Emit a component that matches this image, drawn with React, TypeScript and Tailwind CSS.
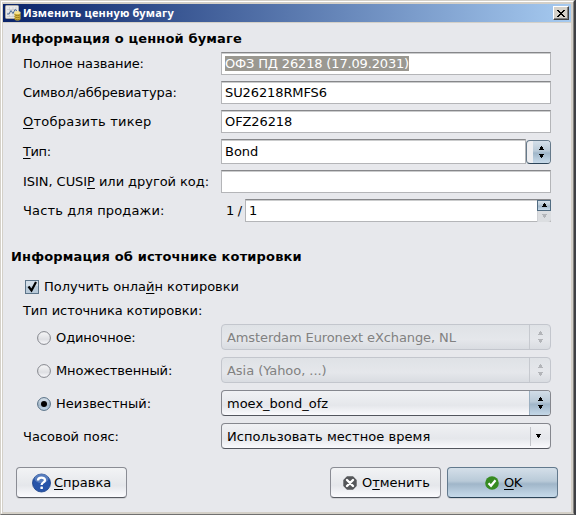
import React from 'react';

type Kids = { children?: React.ReactNode };

function Arrow({ down = false }: { down?: boolean }) {
  return (
    <svg width="5" height="4" viewBox="0 0 5 4" shapeRendering="crispEdges" className={down ? 'rotate-180' : ''}>
      <path d="M2 0H3V1H4V3H5V4H0V3H1V1H2Z" fill="currentColor" />
    </svg>
  );
}

function UpDown() {
  return (
    <span className="flex flex-col items-center gap-[4px]">
      <Arrow />
      <Arrow down />
    </span>
  );
}

function Label({ children, className = '' }: Kids & { className?: string }) {
  return <span className={'block w-[198px] shrink-0 whitespace-nowrap ' + className}>{children}</span>;
}

function Row({ children, className = '' }: Kids & { className: string }) {
  return <div className={'flex items-center ' + className}>{children}</div>;
}

function Field({ children, className = '' }: Kids & { className?: string }) {
  return (
    <div className={'flex h-[23px] w-[330px] items-center border border-[#b4b5b8] border-t-[#86878a] bg-white pl-[3px] shadow-[inset_0_1px_0_#cbcccd] ' + className}>
      {children}
    </div>
  );
}

const blueFace = 'bg-[linear-gradient(180deg,#d4dfe9_0%,#b9cad8_45%,#a0b6c9_55%,#bbcfe0_85%,#c6d9e9_100%)]';

function Combo({ children, disabled = false, className = '' }: Kids & { disabled?: boolean; className?: string }) {
  return (
    <div
      className={
        'flex h-[26px] w-[330px] items-center justify-between overflow-hidden rounded-[4px] border pl-[5px] ' +
        (disabled
          ? 'border-[#c3c6cd] bg-[linear-gradient(180deg,#dfe2e6,#e5e7eb_60%,#d9dce1)] text-[#818181]'
          : 'border-[#85878e] border-b-[#53565e] bg-[linear-gradient(180deg,#f0f1f4,#e5e7eb_60%,#fafafd)]')
      }
    >
      <span className={'pt-px ' + className}>{children}</span>
      <span
        className={
          'flex h-[26px] w-[21px] items-center justify-center ' +
          (disabled ? 'border-l border-[#c6c9cf] text-[#b3b5b9]' : 'border-l border-[#9bafc0] ' + blueFace)
        }
      >
        <UpDown />
      </span>
    </div>
  );
}

function Radio({ checked = false }: { checked?: boolean }) {
  return (
    <svg width="14" height="14" viewBox="0 0 14 14" className="mr-[5px] shrink-0">
      <defs>
        <linearGradient id="radioOff" x1="0" y1="0" x2="0" y2="1">
          <stop offset="0" stopColor="#f7f7f8" />
          <stop offset=".6" stopColor="#dedfe3" />
          <stop offset="1" stopColor="#fcfcff" />
        </linearGradient>
        <linearGradient id="radioOn" x1="0" y1="0" x2="0" y2="1">
          <stop offset="0" stopColor="#dbe5ee" />
          <stop offset=".6" stopColor="#a4b8ca" />
          <stop offset="1" stopColor="#c8def0" />
        </linearGradient>
      </defs>
      <circle cx="7" cy="7" r="6.4" fill={checked ? 'url(#radioOn)' : 'url(#radioOff)'} stroke={checked ? '#526b80' : '#83858c'} />
      {checked && <circle cx="7" cy="7" r="3" fill="#000" />}
    </svg>
  );
}

function Button({ children, className = '', blue = false }: Kids & { className?: string; blue?: boolean }) {
  return (
    <button
      className={
        'flex h-[31px] w-[111px] items-center rounded-[4px] border shadow-[0_1px_0_#d0d2d6] ' +
        (blue ? 'border-[#62798d] border-b-[#2c4458] ' + blueFace : 'border-[#8a8c94] border-b-[#565960] bg-[linear-gradient(180deg,#f2f3f5,#e5e7eb_60%,#fbfbfe)]') +
        ' ' + className
      }
    >
      {children}
    </button>
  );
}

function U({ children }: Kids) {
  return <span className="underline decoration-1 underline-offset-2">{children}</span>;
}

export default function App() {
  return (
    <div className="flex h-[515px] w-[576px] bg-[#3e4148] font-['DejaVu_Sans',sans-serif] text-[13px] leading-[15px] text-black">
      <div className="h-[515px] w-[575px] border-r border-b border-r-[#404040] border-b-[#707070] border-l border-t border-l-[#d4d0c8] border-t-[#d4d0c8]">
        <div className="h-full border border-[#808080] border-l-white border-t-white border-b-[#d4d0c8]">
          <div className="h-full border border-t-2 border-r-2 border-[#d4d0c8] bg-[#e7e8ec]">
            <div className="flex h-[18px] items-center bg-[linear-gradient(90deg,#0a246a,#a6caf0)] pr-[2px] pl-[2px]">
              <svg width="17" height="16" viewBox="0 0 17 16" className="shrink-0">
                <rect x=".5" y=".5" width="13" height="13" rx="1" fill="#e8e9eb" stroke="#aaa9a5" />
                <path d="M2 4.5H12M2 8H12M2 11.5H12M4.500 2V12M8 2V12M11 2V12" stroke="#c4c7cb" strokeWidth=".6" />
                <path d="M2 9L4 9L6 5.500L8 8.500L10 4.500L12 6" fill="none" stroke="#4a6c98" strokeWidth="1" />
                <path d="M9.500 7.500V14C10 16 15 16 15.500 14V7.500Z" fill="#d6b842" />
                <ellipse cx="12.500" cy="7.500" rx="3" ry="1.500" fill="#f5e391" />
                <path d="M9.500 9.500C11 11 14 11 15.500 9.500M9.500 11.500C11 13 14 13 15.500 11.500M9.500 13.500C11 15 14 15 15.500 13.500" fill="none" stroke="#8d6c12" strokeWidth=".8" />
              </svg>
              <span className="ml-px font-['Noto_Sans',sans-serif] text-[11px] font-bold leading-[14px] tracking-[0.22px] text-white">Изменить ценную бумагу</span>
              <span className="ml-auto flex h-[14px] w-[16px] items-center justify-center border border-white border-r-[#404040] border-b-[#404040] bg-[#d4d0c8] shadow-[inset_-1px_-1px_0_#808080]">
                <svg width="8" height="7" viewBox="0 0 8 7" shapeRendering="crispEdges">
                  <path d="M0 0H2V1H3V2H5V1H6V0H8V1H7V2H6V3H5V4H6V5H7V6H8V7H6V6H5V5H3V6H2V7H0V6H1V5H2V4H3V3H2V2H1V1H0Z" />
                </svg>
              </span>
            </div>
            <div className="h-px bg-[#d4d0c8]" />

            <h1 className="mt-[8px] ml-[8px] font-bold leading-[16px] tracking-[0.15px]">Информация о ценной бумаге</h1>
            <div className="pl-[20px]">
              <Row className="mt-[5px]">
                <Label className="tracking-[-0.13px]">Полное название:</Label>
                <Field><span className="bg-[#9a9891] tracking-[-0.16px] text-white">ОФЗ ПД 26218 (17.09.2031)</span></Field>
              </Row>
              <Row className="mt-[6px]">
                <Label className="tracking-[-0.1px]">Символ/аббревиатура:</Label>
                <Field className="tracking-[-0.1px]">SU26218RMFS6</Field>
              </Row>
              <Row className="mt-[6px]">
                <Label className="tracking-[0.23px]"><U>О</U>тобразить тикер</Label>
                <Field className="tracking-[-0.1px]">OFZ26218</Field>
              </Row>
              <Row className="mt-[6px]">
                <Label className="tracking-[-0.4px]"><U>Т</U>ип:</Label>
                <div className="flex h-[25px] w-[305px] items-center border border-[#b4b5b8] border-t-[#86878a] bg-white pl-[3px] shadow-[inset_0_1px_0_#cbcccd]">Bond</div>
                <div className="flex h-[24px] w-[25px] overflow-hidden rounded-[4px] border border-[#65798a] border-b-[#2c4458] bg-[#edeef1]">
                  <span className={'ml-auto flex w-[17px] items-center justify-center ' + blueFace}><UpDown /></span>
                </div>
              </Row>
              <Row className="mt-[6px]">
                <Label className="tracking-[-0.05px]">ISIN, CUSI<U>P</U> или другой код:</Label>
                <Field />
              </Row>
              <Row className="mt-[6px]">
                <Label className="tracking-[0.15px]">Часть для продажи:</Label>
                <span className="w-[24px] pl-[5px] tracking-[-0.3px] whitespace-nowrap">1 /</span>
                <div className="flex h-[23px] w-[306px] items-center border border-[#b4b5b8] border-t-[#86878a] bg-white pl-[3px] shadow-[inset_0_1px_0_#cbcccd]">
                  <span>1</span>
                  <span className="-mr-px ml-auto flex h-[22px] w-[14px] flex-col">
                    <span className={'flex h-[11px] items-center justify-center border border-[#516c82] ' + blueFace}><Arrow /></span>
                    <span className="flex h-[11px] items-center justify-center rounded-br-[3px] border-l border-[#cfd1d5] bg-[#dcdee1] text-[#b3b5b9]"><Arrow down /></span>
                  </span>
                </div>
              </Row>
            </div>

            <h2 className="mt-[27px] ml-[8px] font-bold leading-[16px] tracking-[0.15px]">Информация об источнике котировки</h2>
            <div className="mt-[14px] flex h-[15px] items-center pl-[22px]">
              <svg width="14" height="14" viewBox="0 0 14 14" className="mr-[5px]">
                <rect x=".5" y=".5" width="13" height="13" fill="#b9cad9" stroke="#5c7489" />
                <rect x="1" y="1" width="12" height="5" fill="#d3dee8" />
                <path d="M3.500 6.500L6.500 10.500L11 2" fill="none" stroke="#000" strokeWidth="2.200" />
              </svg>
              <span>Получить онла<U>й</U>н котировки</span>
            </div>
            <div className="mt-[9px] pl-[20px] tracking-[-0.08px]">Тип источника котировки:</div>
            <div className="mt-[6px] flex flex-col gap-[7px] pl-[20px]">
              <Row className="h-[26px]">
                <Label className="pt-px"><span className="flex items-center pl-[14px] tracking-[-0.1px]"><Radio />Одиночное:</span></Label>
                <Combo disabled className="tracking-[-0.1px]">Amsterdam Euronext eXchange, NL</Combo>
              </Row>
              <Row className="h-[26px]">
                <Label className="pt-px"><span className="flex items-center pl-[14px] tracking-[-0.12px]"><Radio />Множественный:</span></Label>
                <Combo disabled className="tracking-[-0.05px]">Asia (Yahoo, ...)</Combo>
              </Row>
              <Row className="h-[26px]">
                <Label className="pt-px"><span className="flex items-center pl-[14px]"><Radio checked />Неизвестный:</span></Label>
                <Combo>moex_bond_ofz</Combo>
              </Row>
              <Row className="h-[26px]">
                <Label className="pt-px">Часовой пояс:</Label>
                <div className="flex h-[26px] w-[330px] items-center justify-between rounded-[4px] border border-[#85878e] border-b-[#53565e] bg-[linear-gradient(180deg,#f0f1f4,#e5e7eb_60%,#fafafd)] pl-[5px]">
                  <span className="pt-px tracking-[0.06px]">Использовать местное время</span>
                  <span className="flex h-[19px] w-[20px] items-center border-l border-[#c2c4c9] pl-[5px]"><Arrow down /></span>
                </div>
              </Row>
            </div>

            <div className="mt-[18px] flex pr-[13px] pl-[13px]">
              <Button className="pl-[15px]">
                <svg width="19" height="20" viewBox="0 0 19 20" className="mr-[3px]">
                  <circle cx="9.500" cy="10" r="9" fill="#2754a9" stroke="#173f86" strokeWidth=".8" />
                  <ellipse cx="9.500" cy="5.500" rx="7" ry="4.500" fill="#7797cd" opacity=".6" />
                  <path d="M6 7.500C6 3.500 13 3.700 13 7.200C13 9.500 9.600 9.300 9.600 12" fill="none" stroke="#fff" strokeWidth="2.300" />
                  <rect x="8.400" y="13.500" width="2.500" height="2.500" rx=".6" fill="#fff" />
                </svg>
                <span><U>С</U>правка</span>
              </Button>
              <Button className="ml-auto pl-[12px]">
                <svg width="14" height="14" viewBox="0 0 14 14" className="mr-[5px]">
                  <path d="M4 .3H10L13.700 4V10L10 13.700H4L.3 10V4Z" fill="#55575a" />
                  <path d="M4 4L10 10M10 4L4 10" stroke="#fff" strokeWidth="2.400" strokeLinecap="round" />
                </svg>
                <span>О<U>т</U>менить</span>
              </Button>
              <Button blue className="ml-[6px] pl-[37px]">
                <svg width="14" height="14" viewBox="0 0 14 14" className="mr-[5px]">
                  <circle cx="7" cy="7" r="6.800" fill="#378b21" />
                  <path d="M3.500 7.300L6 9.800L10.500 4.200" fill="none" stroke="#fff" strokeWidth="2.200" />
                </svg>
                <span className="tracking-[-0.5px]"><U>O</U>K</span>
              </Button>
            </div>
          </div>
        </div>
      </div>
    </div>
  );
}
